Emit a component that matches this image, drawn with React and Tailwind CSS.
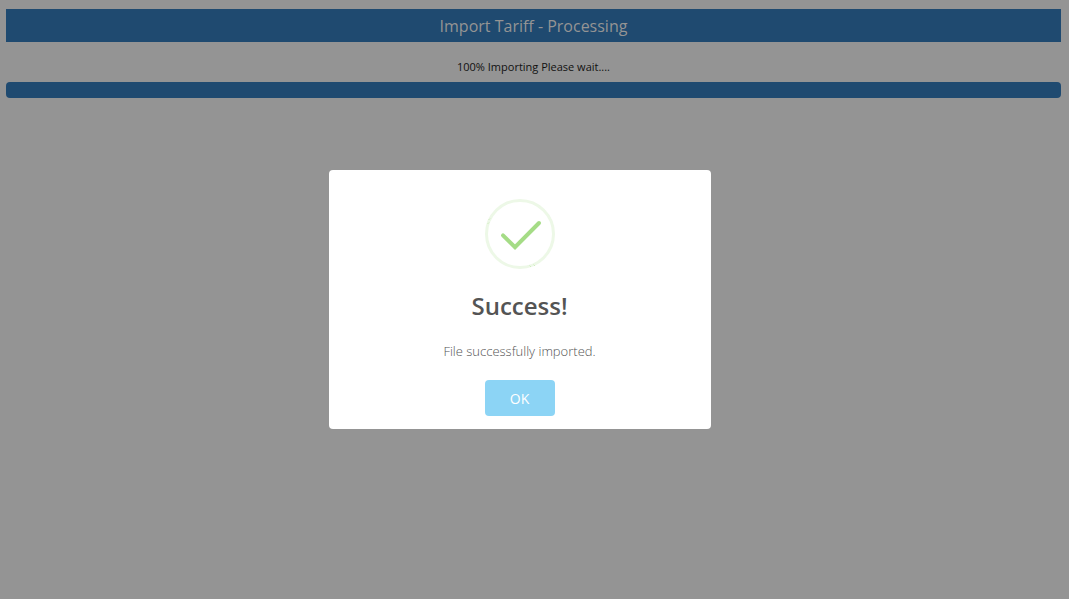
export default function App() {
  return (
    <div className="min-h-screen bg-[#949494] px-1.5 pt-2 pr-2 font-['Open_Sans',sans-serif]">
      <main>
        <h1 className="mt-px bg-[#1f4a70] pt-[5px] pb-1 text-center text-base leading-6 text-[#949494]">
          Import Tariff - Processing
        </h1>
        <p id="import-status" className="mt-4 text-center text-[11px] leading-[18px] text-[#111111]">
          100% Importing Please wait....
        </p>
        <div
          role="progressbar"
          aria-labelledby="import-status"
          aria-valuenow={100}
          aria-valuemin={0}
          aria-valuemax={100}
          className="mt-1.5 h-4 overflow-hidden rounded"
        >
          <div className="h-full w-full bg-[#1f4a70]" />
        </div>
      </main>
      <div className="fixed inset-0 flex items-center justify-center pr-[30px]">
        <div
          role="dialog"
          aria-modal="true"
          aria-labelledby="dialog-title"
          className="flex w-full max-w-[382px] flex-col items-center rounded bg-white pt-7 pb-[13px]"
        >
          <svg className="size-18" viewBox="0 0 72 72" fill="none" aria-hidden="true">
            <circle cx="36" cy="36" r="33.5" stroke="#edf8e7" strokeWidth="3" />
            <path d="M19 37.3 31 49.2 55 25" stroke="#a5dc86" strokeWidth="4" strokeLinecap="round" />
            <path
              d="M3.5 26 5 24.5M4.5 22 6 20.5M45.5 67.5 47 69M49.5 66.5 51 68"
              stroke="#a5dc86"
              strokeWidth="0.6"
              strokeOpacity="0.7"
            />
          </svg>
          <h2 id="dialog-title" className="mt-4 text-2xl leading-10 font-semibold text-[#545454]">
            Success!
          </h2>
          <p className="mt-3.5 text-[13px] leading-[22px] font-light text-[#545454]">
            File successfully imported.
          </p>
          <button type="button" className="mt-[18px] h-9 w-[70px] rounded bg-[#8cd4f5] pt-0.5 text-sm text-white">
            OK
          </button>
        </div>
      </div>
    </div>
  );
}
